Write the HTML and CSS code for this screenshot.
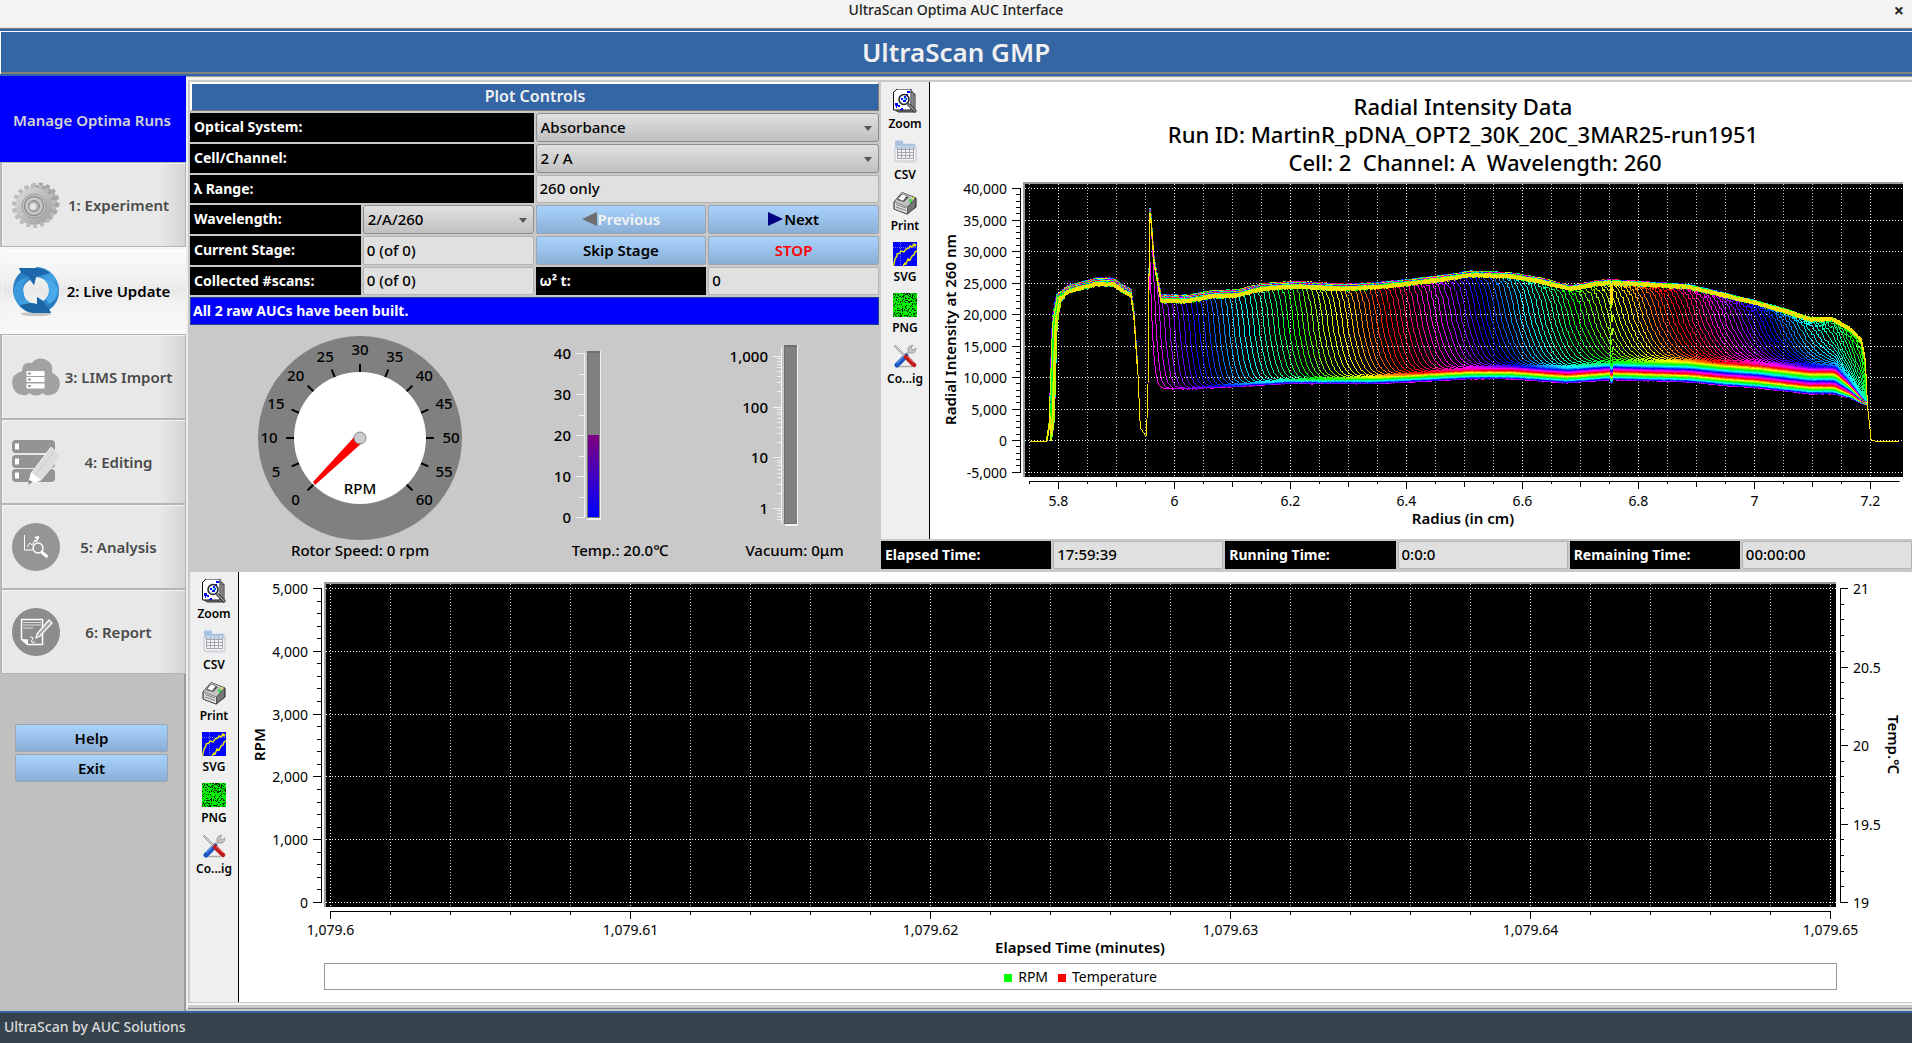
FILE: index.html
```html
<!DOCTYPE html>
<html lang="en">
<head>
	<meta charset="utf-8">
	<meta name="viewport" content="width=device-width, initial-scale=1">
	<title>UltraScan Optima AUC Interface</title>
	<link rel="stylesheet" href="styles.css">
</head>
<body>
	<!-- shared toolbar icons -->
	<svg class="defs" width="0" height="0" aria-hidden="true">
		<defs>
			<symbol id="i-zoom" viewBox="0 0 24 24">
				<path d="M5 5h17v18H5z" fill="#bbb" stroke="#333"/>
				<path d="M3 3h17v19H3z" fill="#ddd" stroke="#333"/>
				<path d="M1 3l3-3h14v21H.5V3z" fill="#fff" stroke="#111"/>
				<path d="M14 2h3v2h-3zM13 5h2v2h-2zM2 14h3v3H2zM5 16h2v2H5zM8 19h2v2H8zM3 17h1v2H3zM7 20h1v1H7z" fill="#00f"/>
				<circle cx="11" cy="10.500" r="5" fill="#e4f4fa" stroke="#222" stroke-width="1.500"/>
				<path d="M8 9h2v2H8zM11 7h2v2h-2zM10 11h3v2h-3zM13 9h1v2h-1z" fill="#11f"/>
				<path d="M11 9h2v2h-2z" fill="#3cc"/>
				<path d="M15 15l8 8" stroke="#222" stroke-width="3"/>
				<path d="M15.500 15.500l7 7" stroke="#aaa" stroke-width="1.200"/>
			</symbol>
			<symbol id="i-csv" viewBox="0 0 24 24">
				<path d="M2 3V1.500q0-1 1-1h6q1 0 1 1V3h12v4H2z" fill="#a9c2e0"/>
				<path d="M10 3h12v1H10z" fill="#d8e4f2"/>
				<path d="M2 6h21v15H2z" fill="#f4f4f4" stroke="#bcc6d2"/>
				<path d="M2.500 6h20v3h-20z" fill="#c5d6ea"/>
				<path d="M4 9.500h17M4 12.500h17M4 15.500h17M4 18.500h17M4.500 7v12M8.500 7v12M12.500 7v12M16.500 7v12M20.500 7v12" stroke="#a4a8ae" fill="none"/>
				<path d="M5 22.500h16" stroke="#ddd"/>
			</symbol>
			<symbol id="i-print" viewBox="0 0 24 24">
				<path d="M1 11L9 1.500l14 5.500v9l-9 7L1 18z" fill="#999" stroke="#222"/>
				<path d="M1.500 11l13 5 8-9L9 1.500z" fill="#c4c4c4"/>
				<path d="M1.500 11l13 5v7L1.500 18z" fill="#e2e2e2" stroke="#555" stroke-width=".6"/>
				<path d="M14.500 16l8-9v9l-8 7z" fill="#777" stroke="#333" stroke-width=".6"/>
				<path d="M8 3l8 3-5 5-7-2z" fill="#555"/>
				<path d="M9 3l5 2-4 5-5-2z" fill="#fff" stroke="#444" stroke-width=".5"/>
				<path d="M3 13.500l10 3.500M3 16l10 3.500" stroke="#777"/>
				<path d="M16 10l2-2M17 11.500l2-2" stroke="#1d2" stroke-width="1.200"/>
				<path d="M19 7.500l2-1" stroke="#dd2" stroke-width="1.500"/>
			</symbol>
			<symbol id="i-svg" viewBox="0 0 24 24">
				<path d="M0 0h24v24H0z" fill="#00f"/>
				<path d="M7.500 0v24M0 5.500h24" stroke="#88f" stroke-width=".8" stroke-dasharray="1 1"/>
				<path d="M.5 24L2 17l2-3v-2l3-1 1-2 3 1 2-3 3-1 1-2 2 1 2-3 1 2 1-2" fill="none" stroke="#ee0" stroke-width="1.400"/>
				<path d="M10 24l2-3 1 1 2-5 2 1 2-4 2-1 1-3 2-1" fill="none" stroke="#ee0" stroke-width="1.400"/>
			</symbol>
			<symbol id="i-png" viewBox="0 0 24 24">
				<path d="M0 0h24v24H0z" fill="#00f000"/>
				<path id="specks" fill="#043004"/>
			</symbol>
			<symbol id="i-config" viewBox="0 0 24 24">
				<path d="M5 22.500h14" stroke="#aaa" stroke-width="1.500"/>
				<path d="M17 7L3 21" stroke="#bbb" stroke-width="2.500"/>
				<path d="M13 12L4 21" stroke="#1c57c4" stroke-width="5" stroke-linecap="round"/>
				<path d="M12 11L4 19" stroke="#5b96ea" stroke-width="1.200"/>
				<path d="M15 7q-1-5 5-6l-2 3 2 2 3-2q0 6-6 5z" fill="#c4c4c4" stroke="#888" stroke-width=".7"/>
				<path d="M1.500 1.500L13 13" stroke="#999" stroke-width="2.200"/>
				<path d="M1.500 1.500L12 12" stroke="#eee" stroke-width=".8"/>
				<path d="M13 13l8 8" stroke="#bf1b1b" stroke-width="4.500" stroke-linecap="round"/>
				<path d="M14 12l7 7" stroke="#ee6a6a" stroke-width="1"/>
			</symbol>
		</defs>
	</svg>

	<div class="titlebar">
		<span>UltraScan Optima AUC Interface</span>
		<button class="close" aria-label="Close">×</button>
	</div>
	<h1 class="banner">UltraScan GMP</h1>

	<div class="workspace">
		<nav class="sidebar">
			<div class="side-title">Manage Optima Runs</div>
			<button class="tab">
				<svg viewBox="0 0 48 48">
					<defs>
						<linearGradient id="gearFill" x1="0" y1="0" x2="1" y2="1"><stop offset="0" stop-color="#dedede"/><stop offset="1" stop-color="#9c9c9c"/></linearGradient>
					</defs>
					<circle cx="27" cy="22" r="18" fill="#a2a2a2"/>
					<circle cx="27" cy="22" r="18" fill="none" stroke="#a8a8a8" stroke-width="5" stroke-dasharray="4 3"/>
					<circle cx="22" cy="25" r="19" fill="url(#gearFill)"/>
					<circle cx="22" cy="25" r="20" fill="none" stroke="#bcbcbc" stroke-width="4" stroke-dasharray="4 3"/>
					<circle cx="22" cy="25" r="12" fill="#c8c8c8" stroke="#989898"/>
					<circle cx="22" cy="25" r="9.500" fill="none" stroke="#8e8e8e" stroke-width="1.500"/>
					<circle cx="22" cy="25" r="5.500" fill="#aaa" stroke="#8c8c8c"/>
					<circle cx="21" cy="25.500" r="3.500" fill="#e4e4e4"/>
				</svg>
				<span>1: Experiment</span>
			</button>
			<button class="tab active">
				<svg viewBox="0 0 48 48">
					<defs>
						<linearGradient id="syncFill" x1="0" y1="0" x2="1" y2="1"><stop offset="0" stop-color="#1b69ad"/><stop offset=".55" stop-color="#43a4e6"/><stop offset="1" stop-color="#1765a6"/></linearGradient>
					</defs>
					<ellipse cx="24" cy="47" rx="15" ry="2" fill="#c4c4c4"/>
					<!-- ring with two arrow notches -->
					<path d="M24 0A23 23 0 0 1 47 23 23 23 0 0 1 37 43L39 46H24A23 23 0 0 1 1 23Q1 12 9 5L7 1H24zM24 10L22 18 18 13Q11 17 11 24 12 33 19 36L25 37V30L31 34Q37 30 37 23 36 11 24 10z" fill="url(#syncFill)" fill-rule="evenodd"/>
					<path d="M7 1h17q8 0 14 5l-14 4-2 8-5-8L9 5z" fill="#1d68aa"/>
					<path d="M39 46H22q-10-1-15-8l12-2 6 1v-7l6 4 6 8z" fill="#1c66a6"/>
					<path d="M2 22Q4 12 15 11q-6 7-3 17l-8 5q-3-5-2-11z" fill="#3b9ade"/>
					<path d="M33 12q10 1 13 11-1 11-9 14l-3-5q7-9-1-20z" fill="#49a9ea"/>
				</svg>
				<span>2: Live Update</span>
			</button>
			<button class="tab">
				<svg viewBox="0 0 48 48">
					<path d="M11 42Q1 41 0 30q0-9 10-12Q10 8 20 10 24 4 32 6q10 3 8 14 8 3 8 11-1 10-10 11-5 1-7-2-7 5-14 0-2 3-6 2z" fill="#a2a2a2"/>
					<path d="M14.500 18h18v5h-18zM14.500 24h18v5h-18zM14.500 30.500h18v5h-18z" fill="#fff"/>
					<path d="M16 20.500h3M16 26.500h3M16 33h3" stroke="#999" stroke-width="2"/>
				</svg>
				<span>3: LIMS Import</span>
			</button>
			<button class="tab">
				<svg viewBox="0 0 48 48">
					<g fill="#949494"><rect y="2" width="43" height="13" rx="4"/><rect y="17" width="43" height="13" rx="4"/><rect y="31" width="43" height="13" rx="4"/></g>
					<path d="M3 5.500h4v6H3zM3 20.500h4v6H3zM3 34.500h4v6H3z" fill="#fff"/>
					<path d="M20 34L39 9l10 9-20 24-13 5z" fill="#dcdcdc" stroke="#eee"/>
					<path d="M24 36L42 14" stroke="#c9c9c9"/>
					<path d="M19 34l10 8-13 5z" fill="#fff"/>
					<path d="M17 42l4 2-5 3z" fill="#888"/>
				</svg>
				<span>4: Editing</span>
			</button>
			<button class="tab">
				<svg viewBox="0 0 48 48">
					<circle cx="24" cy="24" r="24" fill="#959595"/>
					<path d="M12.500 12v15h8M15 24l3-4 2 2 3-5 1 2 3-5" fill="none" stroke="#fff"/>
					<path d="M22 14l5-1-1 5z" fill="#fff"/>
					<circle cx="26" cy="25" r="5" fill="none" stroke="#fff" stroke-width="1.500"/>
					<path d="M29.500 29l6 5" stroke="#fff" stroke-width="3"/>
				</svg>
				<span>5: Analysis</span>
			</button>
			<button class="tab">
				<svg viewBox="0 0 48 48">
					<circle cx="24" cy="24" r="24" fill="#8c8c8c"/>
					<path d="M9.500 11.500h21v25h-15l-6-5z" fill="none" stroke="#fff" stroke-width="1.500"/>
					<path d="M9 31l7 .5V37z" fill="#fff"/>
					<path d="M11 14.500h18M11 17h18M11 20h10" stroke="#ddd"/>
					<path d="M25 26L37 12l3 3-12 13-4 2z" fill="#a8a8a8" stroke="#fff" stroke-width="1.200"/>
					<path d="M18 29q5 0 2 3-2 3 3 2" fill="none" stroke="#fff"/>
				</svg>
				<span>6: Report</span>
			</button>
			<div class="side-foot">
				<div class="side-actions">
					<button class="btn">Help</button>
					<button class="btn">Exit</button>
				</div>
			</div>
		</nav>

		<main class="content">
			<div class="upper">
				<section class="controls">
					<h2 class="section-title">Plot Controls</h2>
					<div class="form">
						<label class="tag half" for="optical">Optical System:</label>
						<div class="combo half"><select id="optical"><option>Absorbance</option></select></div>
						<label class="tag half" for="cell">Cell/Channel:</label>
						<div class="combo half"><select id="cell"><option>2 / A</option></select></div>
						<label class="tag half" for="lrange">λ Range:</label>
						<input class="field half" id="lrange" value="260 only" readonly>
						<label class="tag" for="wavelength">Wavelength:</label>
						<div class="combo"><select id="wavelength"><option>2/A/260</option></select></div>
						<button class="btn" disabled><svg class="arrow" viewBox="0 0 15 14"><path d="M15 0v14L0 7z" fill="#6e6e6e"/></svg>Previous</button>
						<button class="btn"><svg class="arrow" viewBox="0 0 15 14"><path d="M0 0v14l15-7z" fill="#000080"/></svg>Next</button>
						<label class="tag" for="stage">Current Stage:</label>
						<input class="field" id="stage" value="0 (of 0)" readonly>
						<button class="btn">Skip Stage</button>
						<button class="btn stop">STOP</button>
						<label class="tag" for="scans">Collected #scans:</label>
						<input class="field" id="scans" value="0 (of 0)" readonly>
						<label class="tag" for="omega">ω² t:</label>
						<input class="field" id="omega" value="0" readonly>
						<input class="message" aria-label="Status" value="All 2 raw AUCs have been built." readonly>
					</div>
					<div class="gauges">
						<figure>
							<svg id="dial" width="208" height="208" viewBox="0 0 208 208"></svg>
							<figcaption>Rotor Speed: 0 rpm</figcaption>
						</figure>
						<figure>
							<svg id="thermo" width="180" height="208" viewBox="0 0 180 208"></svg>
							<figcaption>Temp.: 20.0℃</figcaption>
						</figure>
						<figure>
							<svg id="vacuum" width="168" height="208" viewBox="0 0 168 208"></svg>
							<figcaption>Vacuum: 0μm</figcaption>
						</figure>
					</div>
				</section>
				<section class="radial">
					<div class="plot">
						<div class="toolbar">
							<button><svg><use href="#i-zoom"/></svg>Zoom</button>
							<button><svg><use href="#i-csv"/></svg>CSV</button>
							<button><svg><use href="#i-print"/></svg>Print</button>
							<button><svg><use href="#i-svg"/></svg>SVG</button>
							<button><svg><use href="#i-png"/></svg>PNG</button>
							<button><svg><use href="#i-config"/></svg>Co...ig</button>
						</div>
						<svg class="chart" id="radial"></svg>
					</div>
					<div class="times">
						<label class="tag" for="elapsed">Elapsed Time:</label>
						<input class="field" id="elapsed" value="17:59:39" readonly>
						<label class="tag" for="running">Running Time:</label>
						<input class="field" id="running" value="0:0:0" readonly>
						<label class="tag" for="remaining">Remaining Time:</label>
						<input class="field" id="remaining" value="00:00:00" readonly>
					</div>
				</section>
			</div>
			<section class="plot lower">
				<div class="toolbar">
					<button><svg><use href="#i-zoom"/></svg>Zoom</button>
					<button><svg><use href="#i-csv"/></svg>CSV</button>
					<button><svg><use href="#i-print"/></svg>Print</button>
					<button><svg><use href="#i-svg"/></svg>SVG</button>
					<button><svg><use href="#i-png"/></svg>PNG</button>
					<button><svg><use href="#i-config"/></svg>Co...ig</button>
				</div>
				<div class="chart-col">
					<svg class="chart" id="history"></svg>
					<div class="legend"><span class="key rpm">RPM</span><span class="key temp">Temperature</span></div>
				</div>
			</section>
		</main>
	</div>
	<footer class="statusbar">UltraScan by AUC Solutions</footer>
	<script src="script.js"></script>
</body>
</html>
```
FILE: styles.css
```css
:root {
	--blue: #3465a4;
	--panel: #c9c9c9;
	--field: #e0e0e0;
}
* {
	box-sizing: border-box;
}
body {
	margin: 0;
	min-height: 100vh;
	display: flex;
	flex-direction: column;
	background: var(--panel);
	font: 500 15px/20px "Noto Sans", sans-serif;
	color: #000;
}
button, input, select {
	font: inherit;
	color: inherit;
	margin: 0;
	border-radius: 0;
	min-width: 0;
}
.defs {
	position: absolute;
}

.titlebar {
	position: relative;
	height: 28px;
	background: #f3f3f3;
	text-align: center;
	font-size: 14px;
	color: #222;
	border-bottom: 1px solid #ddd;
}
.close {
	position: absolute;
	right: 3px;
	top: 0;
	width: 20px;
	height: 20px;
	padding: 0;
	border: 0;
	background: none;
	font-size: 18px;
	font-weight: 700;
	line-height: 20px;
}
.banner {
	margin: 0;
	height: 48px;
	background: var(--blue);
	border-top: 1px solid #808080;
	border-bottom: 2px solid var(--blue);
	box-shadow: inset 0 2px var(--blue), inset 1px 3px #fff, inset 0 -2px #808080;
	color: #f0f0f0;
	text-align: center;
	font-size: 26px;
	font-weight: 600;
	line-height: 46px;
}

.workspace {
	flex: 1;
	display: flex;
}
.sidebar {
	width: 186px;
	flex-shrink: 0;
	display: flex;
	flex-direction: column;
	background: #c0c0c0;
}
.side-title {
	height: 86px;
	background: #00f;
	color: #d3d3d3;
	text-align: center;
	font-weight: 600;
	line-height: 88px;
	padding-right: 2px;
}
.tab {
	height: 85px;
	flex-shrink: 0;
	display: flex;
	align-items: center;
	padding: 0 8px 0 10px;
	border: 1px solid #b4b4b4;
	border-left: 2px solid #b8b8b8;
	background: linear-gradient(90deg, #e8e8e8 86%, #d4d4d4);
	box-shadow: inset 1px 1px #f4f4f4;
	color: #4a4a4a;
	font-size: 15px;
	font-weight: 600;
}
.tab svg {
	width: 48px;
	height: 48px;
	overflow: visible;
}
.tab span {
	flex: 1;
	white-space: nowrap;
}
.tab.active {
	height: 87px;
	border-color: transparent;
	background: linear-gradient(#fcfcfc, #f2f2f2 35%, #e8e8e8 50%, #f2f2f2 65%, #fafafa);
	color: #000;
}
.side-foot {
	flex: 1;
	border-right: 2px solid #999;
	padding: 50px 16px 0 15px;
}
.side-actions {
	display: grid;
	gap: 2px;
}
.btn {
	height: 28px;
	display: flex;
	align-items: center;
	justify-content: center;
	padding: 0 0 1px;
	border: 1px solid #9aa6b2;
	border-radius: 2px;
	background: linear-gradient(#a9d3fc, #8aafd6);
	font-size: 15px;
	font-weight: 600;
}
.btn:disabled {
	color: #f4f4f4;
}
.stop {
	color: #f00;
}
.arrow {
	width: 15px;
	height: 14px;
	margin-right: 1px;
}

.content {
	flex: 1;
	min-width: 0;
	display: flex;
	flex-direction: column;
	gap: 2px;
	margin: 0 0 2px;
	padding: 5px 0 7px 4px;
	box-shadow: inset 0 3px #f2f2f2, inset 2px 0 #eee, inset 0 -1px #888, inset 0 -4px var(--panel), inset 0 -6px #f6f6f6;
	border-top: 1px solid #999;
}
.upper {
	display: flex;
	gap: 2px;
}
.controls {
	flex: 689;
	min-width: 0;
	display: flex;
	flex-direction: column;
}
.section-title {
	margin: 0 0 2px;
	height: 29px;
	background: var(--blue);
	border: 1px solid #fff;
	border-width: 2px 1px 1px 2px;
	border-bottom-color: #777;
	border-right-color: #777;
	color: #f0f0f0;
	text-align: center;
	font-size: 16px;
	font-weight: 600;
	line-height: 24px;
}
.form {
	display: grid;
	grid-template-columns: repeat(4, minmax(0, 1fr));
	grid-template-rows: 29px 29px 28px 29px 29px 28px 28px;
	gap: 2px;
}
.form > * {
	height: 100%;
}
.half {
	grid-column: span 2;
}
.tag {
	display: flex;
	align-items: center;
	padding-left: 4px;
	padding-bottom: 1px;
	background: #000;
	color: #fff;
	font-weight: 700;
	font-size: 14px;
	white-space: nowrap;
}
.field {
	width: 100%;
	padding: 0 0 2px 3px;
	border: 1px solid #b4b4b4;
	border-radius: 2px;
	background: var(--field);
}
.combo {
	position: relative;
}
.combo select {
	width: 100%;
	height: 100%;
	appearance: none;
	padding: 0 20px 1px 4px;
	border: 1px solid #8c8c8c;
	border-radius: 3px;
	background: linear-gradient(#e0e0e0, #c0c0c0);
}
.combo::after {
	content: "";
	position: absolute;
	right: 7px;
	top: 13px;
	border: 4px solid transparent;
	border-top: 5px solid #555;
	border-bottom: 0;
}
.message {
	grid-column: 1 / -1;
	padding: 0 2px 2px;
	border: 1px solid #224488;
	background: #00f;
	color: #fff;
	font-size: 14px;
	font-weight: 700;
}

.gauges {
	display: grid;
	grid-template-columns: 340fr 180fr 169fr;
	padding-top: 9px;
	min-height: 245px;
}
.gauges figure {
	margin: 0;
	display: flex;
	flex-direction: column;
	align-items: center;
}
.gauges figcaption {
	margin-top: -2px;
	font-weight: 500;
	white-space: nowrap;
}
.gauges text {
	font-size: 15px;
	text-anchor: middle;
	dominant-baseline: central;
}
.gauges .end {
	text-anchor: end;
}

.radial {
	flex: 1031;
	min-width: 0;
	display: flex;
	flex-direction: column;
	gap: 2px;
	padding-bottom: 1px;
}
.plot {
	flex: 1;
	min-height: 0;
	display: flex;
	background: #fff;
}
.toolbar {
	width: 49px;
	flex-shrink: 0;
	padding-top: 6px;
	background: #efefef;
	border-right: 1px solid #000;
}
.toolbar button {
	width: 100%;
	height: 51px;
	display: flex;
	flex-direction: column;
	align-items: center;
	gap: 3px;
	padding: 1px 0 0;
	border: 0;
	background: none;
	font-size: 12px;
	font-weight: 600;
	line-height: 16px;
}
.toolbar svg {
	width: 24px;
	height: 24px;
}
.chart {
	flex: 1;
	min-width: 0;
	min-height: 0;
	display: block;
}
.chart-col {
	flex: 1;
	min-width: 0;
	display: flex;
	flex-direction: column;
}
.chart text {
	font-size: 14px;
	font-weight: 400;
	text-anchor: middle;
	dominant-baseline: central;
}
.chart .end {
	text-anchor: end;
}
.chart .start {
	text-anchor: start;
}
.chart .axis-title {
	font-size: 15px;
	font-weight: 600;
}
.chart .heading {
	font-size: 22px;
	font-weight: 500;
	white-space: pre;
}
.legend {
	height: 27px;
	margin: 0 75px 12px 85px;
	border: 1px solid #999;
	display: flex;
	align-items: center;
	justify-content: center;
	gap: 10px;
	font-size: 14px;
	font-weight: 400;
}
.key::before {
	content: "";
	display: inline-block;
	width: 8px;
	height: 8px;
	margin-right: 6px;
	background: #0f0;
}
.temp::before {
	background: #f00;
}
.times {
	display: grid;
	grid-template-columns: repeat(6, minmax(0, 1fr));
	grid-auto-rows: 28px;
	gap: 2px;
}

.statusbar {
	height: 32px;
	padding: 4px;
	border-top: 2px solid var(--blue);
	background: #36434d;
	color: #dcdcdc;
	font-size: 14px;
}
```
FILE: script.js
```js
const NS = 'http://www.w3.org/2000/svg';

let seed = 7;
function rnd() {
	seed = (seed * 1103515245 + 12345) % 2147483648;
	return seed / 2147483648;
}

function add(parent, name, attrs, text) {
	const el = document.createElementNS(NS, name);
	for (const key in attrs) {
		el.setAttribute(key, attrs[key]);
	}
	if (text !== undefined) {
		el.textContent = text;
	}
	parent.appendChild(el);
	return el;
}

function line(svg, x1, y1, x2, y2, stroke, extra) {
	return add(svg, 'path', Object.assign({ d: `M${x1} ${y1}L${x2} ${y2}`, stroke: stroke || '#000', fill: 'none' }, extra));
}

// gauges

function drawDial() {
	const svg = document.querySelector('#dial');
	const c = 104;
	add(svg, 'circle', { cx: c, cy: c, r: 102, fill: '#808080' });
	add(svg, 'circle', { cx: c, cy: c, r: 66, fill: '#fff' });
	for (let v = 0; v <= 60; v += 5) {
		const a = (225 - v * 4.5) * Math.PI / 180;
		const dx = Math.cos(a);
		const dy = -Math.sin(a);
		line(svg, c + 66 * dx, c + 66 * dy, c + 74 * dx, c + 74 * dy, '#000', { 'stroke-width': 2 });
		add(svg, 'text', { x: c + 91 * dx, y: c - 1 + 88 * dy }, v);
	}
	add(svg, 'text', { x: c, y: 154 }, 'RPM');
	add(svg, 'path', { d: 'M100 101L57 148l2 3 48-43z', fill: '#f00' });
	add(svg, 'circle', { cx: c, cy: c, r: 6, fill: '#ccccd0', stroke: '#888' });
}

function drawThermo() {
	const svg = document.querySelector('#thermo');
	const defs = add(svg, 'defs', {});
	const grad = add(defs, 'linearGradient', { id: 'heat', x1: 0, y1: 0, x2: 0, y2: 1 });
	add(grad, 'stop', { offset: 0, 'stop-color': '#800080' });
	add(grad, 'stop', { offset: 1, 'stop-color': '#00f' });
	add(svg, 'rect', { x: 57, y: 17, width: 14, height: 169, fill: '#f2f2f2' });
	add(svg, 'rect', { x: 57, y: 17, width: 13, height: 167, fill: '#707070' });
	add(svg, 'rect', { x: 58, y: 19, width: 12, height: 165, fill: '#808080' });
	add(svg, 'rect', { x: 58, y: 101, width: 11, height: 82, fill: 'url(#heat)' });
	line(svg, 54.5, 19, 54.5, 184, '#f2f2f2');
	for (let v = 0; v <= 40; v += 5) {
		const y = Math.round(183 - v * 4.1) + 0.5;
		line(svg, v % 10 ? 49 : 46, y, 54, y, '#f2f2f2');
		if (v % 10 === 0) {
			add(svg, 'text', { x: 41, y: y - 1, class: 'end' }, v);
		}
	}
}

function drawVacuum() {
	const svg = document.querySelector('#vacuum');
	add(svg, 'rect', { x: 74, y: 11, width: 13, height: 181, fill: '#f2f2f2' });
	add(svg, 'rect', { x: 73, y: 11, width: 13, height: 179, fill: '#707070' });
	add(svg, 'rect', { x: 74, y: 13, width: 12, height: 176, fill: '#808080' });
	line(svg, 70.5, 13, 70.5, 190, '#f2f2f2');
	for (let d = -1; d <= 3; d++) {
		for (let m = 1; m < 10; m++) {
			const lg = d + Math.log10(m);
			const y = Math.round(174 - lg * 50.7) + 0.5;
			if (lg < -0.3 || y < 13) {
				continue;
			}
			line(svg, m === 1 ? 62 : 66, y, 70, y, '#f2f2f2');
			if (m === 1) {
				add(svg, 'text', { x: 57, y: y - 1, class: 'end' }, (10 ** d).toLocaleString('en-US'));
			}
		}
	}
}

// plots

function snap(v) {
	return Math.floor(v) + 0.5;
}

function frame(svg, box) {
	add(svg, 'rect', { x: box.l, y: box.t, width: box.r - box.l, height: box.b - box.t, fill: '#9e9e9e' });
	add(svg, 'rect', { x: box.l + 2, y: box.t + 2, width: box.r - box.l - 2, height: box.b - box.t - 2, fill: '#000' });
}

function gridLine(svg, x1, y1, x2, y2, major) {
	line(svg, x1, y1, x2, y2, major ? '#fff' : '#c0c0c0', { 'stroke-dasharray': '1 2', 'shape-rendering': 'crispEdges' });
}

// outlines of the intensity trace, as [radius, counts]
const TOP = [
	[5.75, 0], [5.779, 0], [5.784, 3000], [5.787, 13000], [5.789, 18600], [5.796, 22600], [5.82, 24000], [5.85, 24700],
	[5.865, 25100], [5.895, 25000], [5.91, 24000], [5.925, 23300], [5.93, 20000], [5.937, 10500], [5.941, 2000],
	[5.951, 700], [5.954, 5700], [5.957, 36300], [5.959, 35800], [5.965, 28200], [5.977, 22400], [6.024, 22400],
	[6.06, 23100], [6.11, 23300], [6.15, 24300], [6.21, 24700], [6.29, 24300], [6.35, 24600], [6.41, 25200],
	[6.47, 25900], [6.51, 26500], [6.58, 26300], [6.63, 25500], [6.683, 24300], [6.728, 25100], [6.753, 25300],
	[6.81, 25000], [6.887, 24600], [6.956, 23100], [7.006, 22000], [7.056, 20700], [7.095, 19500], [7.135, 19500],
	[7.164, 18000], [7.184, 16200], [7.191, 13000], [7.195, 5200], [7.201, 200], [7.21, -150], [7.25, -150]
];
const BOTTOM = [
	[5.977, 8250], [6.024, 8250], [6.113, 8650], [6.193, 9100], [6.351, 9100], [6.43, 9450], [6.51, 9850], [6.58, 9850],
	[6.678, 9200], [6.753, 9700], [6.887, 9350], [6.946, 8800], [7.006, 8400], [7.095, 7450], [7.135, 7450],
	[7.164, 6800], [7.191, 5700], [7.25, 5700]
];

function lookup(table, x) {
	if (x <= table[0][0]) {
		return table[0][1];
	}
	for (let i = 1; i < table.length; i++) {
		if (x <= table[i][0]) {
			const [x0, y0] = table[i - 1];
			const [x1, y1] = table[i];
			return y0 + (y1 - y0) * (x - x0) / (x1 - x0);
		}
	}
	return table[table.length - 1][1];
}

function drawScans(svg, sx, sy) {
	const count = 157;
	const from = Math.ceil(sx(5.75));
	const to = Math.floor(sx(7.25));
	const toR = px => 5.75 + 1.5 * (px - sx(5.75)) / (sx(7.25) - sx(5.75));
	for (let i = 0; i < count; i++) {
		const age = i / (count - 1);
		const edge = 5.96 + 0.0085 * i;
		const width = 0.005 + 0.021 * age;
		const lift = 5600 * Math.pow(age, 1.2);
		const slip = rnd() * 0.009;
		let d = '';
		for (let px = from; px <= to; px++) {
			const r = toR(px);
			let high = lookup(TOP, r < 5.81 ? r - slip * (r > 5.786 ? 1 : 0.2) : r);
			if (high > 12000) {
				high += (1 - age) * 750 + (rnd() - 0.5) * 750 - 250;
			}
			if (Math.abs(r - 6.7535) < 0.0012) {
				high -= rnd() * 3500;
			}
			let y = high;
			if (r > 5.956) {
				const k = (r - edge) / width;
				const mix = k < 0 ? 1 / (1 + Math.exp(k * 2)) : 1 / (1 + Math.exp(k * 1.2));
				// the lift dies out towards the cell bottom
				const fade = 1 - 0.85 * Math.min(1, Math.max(0, (r - 7.14) / 0.05));
				let low = lookup(BOTTOM, r) + lift * fade + (rnd() - 0.5) * 150;
				if (Math.abs(r - 6.7535) < 0.002) {
					low -= 600;
				}
				low = Math.min(low, high);
				y = low + (high - low) * mix;
			}
			d += (d ? 'L' : 'M') + px + ' ' + Math.round(sy(y));
		}
		const hue = (300 - i * 6.2 + 1080) % 360;
		const stroke = i > count - 4 ? '#ffe000' : `hsl(${Math.round(hue)}, 100%, 50%)`;
		add(svg, 'path', { d: d, stroke: stroke, fill: 'none', 'shape-rendering': 'crispEdges' });
	}
}

function drawRadial() {
	const svg = document.querySelector('#radial');
	svg.textContent = '';
	seed = 7;
	const w = svg.clientWidth;
	const h = svg.clientHeight;
	const box = { l: 93, t: 100, r: w - 9, b: h - 62 };
	const x0 = box.l + 6.5;
	const x1 = box.r - 3.5;
	const y0 = box.b - 5;
	const y1 = box.t + 6.5;
	const sx = v => x0 + (v - 5.75) / 1.5 * (x1 - x0);
	const sy = v => y0 - (v + 5000) / 45000 * (y0 - y1);
	const mid = (box.l + box.r) / 2;

	add(svg, 'text', { x: mid, y: 24, class: 'heading' }, 'Radial Intensity Data');
	add(svg, 'text', { x: mid, y: 52, class: 'heading' }, 'Run ID: MartinR_pDNA_OPT2_30K_20C_3MAR25-run1951');
	add(svg, 'text', { x: mid + 12, y: 80, class: 'heading' }, 'Cell: 2  Channel: A  Wavelength: 260');

	frame(svg, box);
	for (let i = 0; i <= 29; i++) {
		const x = snap(sx(5.75 + i * 0.05));
		const major = i % 4 === 1;
		gridLine(svg, x, box.t + 2, x, box.b, major);
		line(svg, x, box.b + 4, x, box.b + (major ? 12 : i % 2 ? 10 : 7));
		if (major) {
			add(svg, 'text', { x: x, y: box.b + 23 }, +(5.75 + i * 0.05).toFixed(1));
		}
	}
	line(svg, snap(sx(5.75)), box.b + 4.5, snap(sx(7.25)), box.b + 4.5);
	for (let v = -5000; v <= 40000; v += 1000) {
		const y = snap(sy(v));
		const major = v % 5000 === 0;
		line(svg, box.l - (major ? 11 : 7), y, box.l - 2, y);
		if (major) {
			gridLine(svg, box.l + 2, y, box.r, y, true);
			add(svg, 'text', { x: box.l - 16, y: y, class: 'end' }, v.toLocaleString('en-US'));
		}
	}
	line(svg, box.l - 2.5, snap(y1), box.l - 2.5, snap(y0));
	drawScans(svg, sx, sy);
	add(svg, 'text', { x: mid, y: box.b + 41, class: 'axis-title' }, 'Radius (in cm)');
	const cy = (box.t + box.b) / 2;
	add(svg, 'text', { x: 0, y: 0, class: 'axis-title', transform: `translate(20 ${cy}) rotate(-90)` }, 'Radial Intensity at 260 nm');
}

function drawHistory() {
	const svg = document.querySelector('#history');
	svg.textContent = '';
	const w = svg.clientWidth;
	const h = svg.clientHeight;
	const box = { l: 85, t: 10, r: w - 76, b: h - 56 };
	const x0 = box.l + 6.5;
	const x1 = box.r - 5.5;
	const y0 = box.b - 4.5;
	const y1 = box.t + 6.5;
	const mid = (box.l + box.r) / 2;
	const cy = (box.t + box.b) / 2;

	frame(svg, box);
	for (let i = 0; i <= 25; i++) {
		const x = snap(x0 + i / 25 * (x1 - x0));
		const major = i % 5 === 0;
		gridLine(svg, x, box.t + 2, x, box.b, major);
		line(svg, x, box.b + 4, x, box.b + (major ? 12 : 8));
		if (major) {
			const minutes = 1079.6 + i / 500;
			add(svg, 'text', { x: x, y: box.b + 22 }, minutes.toLocaleString('en-US', { maximumFractionDigits: 2 }));
		}
	}
	line(svg, snap(x0), box.b + 4.5, snap(x1), box.b + 4.5);
	for (let i = 0; i <= 25; i++) {
		const y = snap(y0 - i / 25 * (y0 - y1));
		const major = i % 5 === 0;
		line(svg, box.l - (major ? 11 : 7), y, box.l - 2, y);
		if (major) {
			gridLine(svg, box.l + 2, y, box.r, y, true);
			add(svg, 'text', { x: box.l - 16, y: y, class: 'end' }, (i * 200).toLocaleString('en-US'));
		}
	}
	for (let i = 0; i <= 20; i++) {
		const y = snap(y0 - i / 20 * (y0 - y1));
		const major = i % 5 === 0;
		line(svg, box.r + 4, y, box.r + (major ? 12 : 8), y);
		if (major) {
			add(svg, 'text', { x: box.r + 17, y: y, class: 'start' }, 19 + i / 10);
		}
	}
	line(svg, box.l - 2.5, snap(y1), box.l - 2.5, snap(y0));
	line(svg, box.r + 4.5, snap(y1), box.r + 4.5, snap(y0));
	add(svg, 'text', { x: mid, y: box.b + 40, class: 'axis-title' }, 'Elapsed Time (minutes)');
	add(svg, 'text', { x: 0, y: 0, class: 'axis-title', transform: `translate(20 ${cy}) rotate(-90)` }, 'RPM');
	add(svg, 'text', { x: 0, y: 0, class: 'axis-title', transform: `translate(${w - 18} ${cy}) rotate(90)` }, 'Temp.℃');
}

function drawSpecks() {
	let d = '';
	for (let y = 0; y < 24; y++) {
		for (let x = 0; x < 24; x++) {
			if (rnd() < 0.12 + Math.abs(y - 13) * 0.022) {
				d += `M${x} ${y}h1v1h-1z`;
			}
		}
	}
	document.querySelector('#specks').setAttribute('d', d);
}

function drawPlots() {
	drawRadial();
	drawHistory();
}

drawSpecks();
drawDial();
drawThermo();
drawVacuum();
drawPlots();
window.addEventListener('resize', drawPlots);
```
